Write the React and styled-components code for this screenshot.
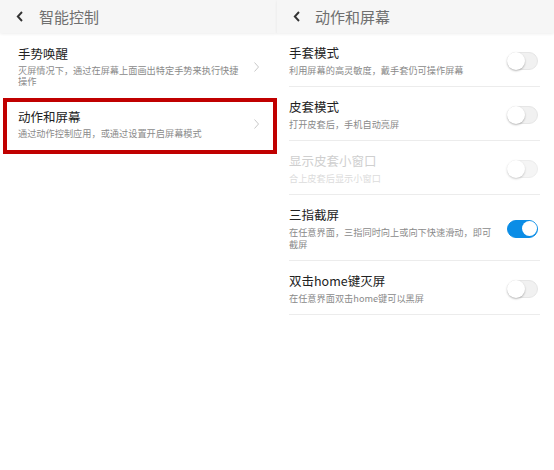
import React from "react";
import styled, { createGlobalStyle } from "styled-components";

const Global = createGlobalStyle`
  html, body { margin: 0; padding: 0; background: #ffffff; }
  body {
    font-family: "Noto Sans CJK SC", "Noto Sans", Roboto, sans-serif;
    -webkit-font-smoothing: antialiased;
  }
`;

const Screens = styled.div`
  display: flex;
  width: 554px;
  height: 470px;
  background: #ffffff;
  overflow: hidden;
`;

const Screen = styled.section`
  display: flex;
  flex-direction: column;
  width: ${(p) => p.$width}px;
  flex: none;
`;

const Header = styled.header`
  display: flex;
  align-items: center;
  gap: ${(p) => p.$gap}px;
  height: 33px;
  padding-left: 16px;
  background: #f6f6f6;
  box-shadow: 0 1px 3px rgba(0, 0, 0, 0.07);
  position: relative;
  z-index: 1;
`;

const HeaderTitle = styled.h1`
  margin: 0;
  font-size: 15px;
  font-weight: 400;
  color: #6f6f6f;
  line-height: 20px;
`;

const BackIcon = () => (
  <svg width="8" height="11" viewBox="0 0 8 11">
    <path d="M6 1 L1.8 5.5 L6 10" fill="none" stroke="#333" strokeWidth="1.9" />
  </svg>
);

const NavItem = styled.div`
  display: flex;
  align-items: center;
  padding: ${(p) => (p.$highlighted ? "7px 12px 11px 11px" : "13px 16px 11px 18px")};
  ${(p) =>
    p.$highlighted &&
    `
    margin-left: 3px;
    border: 4px solid #c00000;
  `}
`;

const Texts = styled.div`
  flex: 1;
  min-width: 0;
`;

const Title = styled.div`
  font-size: 12.5px;
  line-height: 16px;
  color: ${(p) => (p.$disabled ? "#cfcfcf" : "#222")};
`;

const Sub = styled.div`
  margin-top: ${(p) => p.$gap}px;
  font-size: 9.2px;
  line-height: ${(p) => p.$lh}px;
  color: ${(p) => (p.$disabled ? "#dcdcdc" : "#8a8a8a")};
`;

const ChevronWrap = styled.div`
  flex: none;
  width: 8px;
  margin-left: 10px;
  display: flex;
  align-items: center;
`;

const Chevron = () => (
  <ChevronWrap>
    <svg width="7" height="12" viewBox="0 0 7 12">
      <path d="M1.5 1.5 L5.5 6 L1.5 10.5" fill="none" stroke="#c8c8c8" strokeWidth="1" />
    </svg>
  </ChevronWrap>
);

const List = styled.div`
  display: flex;
  flex-direction: column;
  padding: 0 14px 0 12px;
`;

const Row = styled.div`
  display: flex;
  align-items: center;
  gap: 14px;
  padding: 12px 2px 10px 0;
  border-bottom: 1px solid #ececec;
`;

const Track = styled.div`
  flex: none;
  position: relative;
  width: 31px;
  height: 18px;
  box-sizing: border-box;
  border-radius: 9px;
  background: ${(p) => (p.$on ? "#0b8de6" : "#f1f1f1")};
  border: 1px solid ${(p) => (p.$on ? "#0b8de6" : "#e6e6e6")};
  opacity: ${(p) => (p.$disabled ? 0.7 : 1)};
`;

const Knob = styled.div`
  position: absolute;
  top: ${(p) => (p.$on ? "0.5px" : "-1px")};
  left: ${(p) => (p.$on ? "13.5px" : "-1px")};
  width: ${(p) => (p.$on ? "15px" : "18px")};
  height: ${(p) => (p.$on ? "15px" : "18px")};
  border-radius: 50%;
  background: #ffffff;
  box-shadow: ${(p) => (p.$on ? "none" : "0 1px 2px rgba(0,0,0,0.28)")};
`;

const Toggle = ({ on, disabled }) => (
  <Track $on={on} $disabled={disabled}>
    <Knob $on={on} />
  </Track>
);

const navItems = [
  { title: "手势唤醒", sub: "灭屏情况下，通过在屏幕上面画出特定手势来执行快捷操作" },
  { title: "动作和屏幕", sub: "通过动作控制应用，或通过设置开启屏幕模式", highlighted: true },
];

const settings = [
  { title: "手套模式", sub: "利用屏幕的高灵敏度，戴手套仍可操作屏幕" },
  { title: "皮套模式", sub: "打开皮套后，手机自动亮屏" },
  { title: "显示皮套小窗口", sub: "合上皮套后显示小窗口", disabled: true },
  { title: "三指截屏", sub: "在任意界面，三指同时向上或向下快速滑动，即可截屏", on: true },
  { title: "双击home键灭屏", sub: "在任意界面双击home键可以黑屏" },
];

export default function App() {
  return (
    <>
      <Global />
      <Screens>
        <Screen $width={277}>
          <Header $gap={15}>
            <BackIcon />
            <HeaderTitle>智能控制</HeaderTitle>
          </Header>
          {navItems.map((it) => (
            <NavItem key={it.title} $highlighted={it.highlighted}>
              <Texts>
                <Title>{it.title}</Title>
                <Sub $gap={3} $lh={11}>{it.sub}</Sub>
              </Texts>
              <Chevron />
            </NavItem>
          ))}
        </Screen>
        <Screen $width={277}>
          <Header $gap={14}>
            <BackIcon />
            <HeaderTitle>动作和屏幕</HeaderTitle>
          </Header>
          <List>
            {settings.map((s) => (
              <Row key={s.title}>
                <Texts>
                  <Title $disabled={s.disabled}>{s.title}</Title>
                  <Sub $gap={3} $lh={12} $disabled={s.disabled}>{s.sub}</Sub>
                </Texts>
                <Toggle on={s.on} disabled={s.disabled} />
              </Row>
            ))}
          </List>
        </Screen>
      </Screens>
    </>
  );
}
